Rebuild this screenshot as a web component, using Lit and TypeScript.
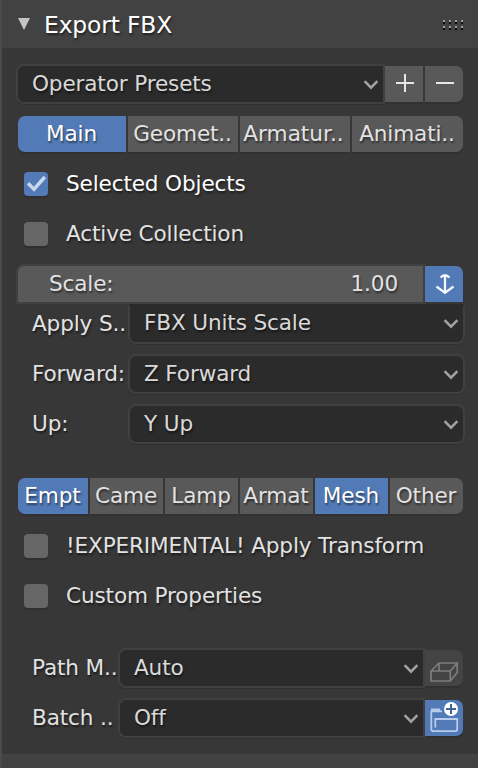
import { LitElement, html, css, svg } from "lit";
import { customElement } from "lit/decorators.js";
import { classMap } from "lit/directives/class-map.js";

const chevron = html`<svg class="chev" width="16" height="10" viewBox="0 0 16 10">
  <path d="M1.600 1.200L8 7.700L14.400 1.200" fill="none" stroke="#a2a2a2" stroke-width="2.500"/></svg>`;

const select = (value: string, cls = "") => html`
  <div class="select ${cls}"><span class="t">${value}</span>${chevron}</div>`;

const check = (label: string, on = false) => html`
  <div class="check">
    <div class=${classMap({ box: true, on })}>
      ${on
        ? html`<svg width="24" height="24" viewBox="0 0 24 24">
            <path d="M4 11.200L10 17.200L20.800 5" fill="none" stroke="#c9d7ef" stroke-width="3.400"/></svg>`
        : ""}
    </div>
    <span class=${classMap({ t: true, bright: on })}>${label}</span>
  </div>`;

const tabs = (cls: string, items: [string, boolean?][]) => html`
  <div class="tabs ${cls}">
    ${items.map(([label, on]) => html`<div class=${classMap({ tab: true, on: !!on })}><span class="t">${label}</span></div>`)}
  </div>`;

@customElement("app-root")
export class AppRoot extends LitElement {
  static styles = css`
    :host {
      display: block;
      width: 478px;
      height: 768px;
      overflow: hidden;
      box-sizing: border-box;
      border-left: 2px solid #4b4b4b;
      background: #373737;
      color: #e2e2e2;
      font: 21.6px/36px "DejaVu Sans", sans-serif;
      letter-spacing: -0.15px;
      text-shadow: 1px 2px 2px rgba(0, 0, 0, 0.5);
    }
    * { box-sizing: border-box; }
    svg { display: block; flex: none; }
    .t { white-space: pre; }
    header {
      height: 48px;
      background: #424242;
      display: flex;
      align-items: center;
      padding: 0 14px 0 16px;
      color: #fff;
      font-size: 23.4px;
    }
    header .t { flex: 1; margin-left: 14px; padding-top: 1px; }
    .tri { margin-top: -1px; }
    .grip { margin-top: 2px; }
    main { padding: 16px 13px 0 14px; height: 706px; display: flex; flex-direction: column; }
    footer { height: 14px; background: #424242; }
    .row { display: flex; height: 40px; margin-bottom: 10px; flex: none; }
    .select {
      flex: 1;
      display: flex;
      align-items: center;
      justify-content: space-between;
      border: 2px solid #404040;
      border-radius: 8px;
      background: #2b2b2b;
      padding: 0 4px 0 14px;
      color: #d9d9d9;
      box-shadow: 0 1px 0 #303030;
    }
    .chev { margin-top: 2px; }
    .joined { border-radius: 8px 0 0 8px; }
    .under { border-top-color: #2b2b2b; border-radius: 0 0 8px 8px; }
    .under .t { margin-top: -2px; }
    .under .chev { margin-top: 0; }
    .label { color: #e2e2e2; padding-left: 16px; width: 112px; flex: none; line-height: 40px; }
    .narrow .label { width: 102px; }
    .btn {
      width: 38px;
      height: 36px;
      margin: 2px 2px 0 0;
      background: #595959;
      flex: none;
      box-shadow: 0 2px 0 #313131;
    }
    .btn.last { border-radius: 0 7px 7px 0; }
    .btn.blue { background: #527ab6; }
    .btn.dim { background: #444; }
    .btn.top { border-radius: 0 7px 0 0; box-shadow: none; }
    .tabs { display: grid; gap: 2px; height: 36px; margin: 2px 0 12px 2px; padding-right: 2px; flex: none; }
    .four { grid-template-columns: 108px 110px 110px 111px; }
    .six { grid-template-columns: 70px repeat(5, 73px); }
    .tab {
      background: #595959;
      text-align: center;
      line-height: 36px;
      overflow: hidden;
      box-shadow: 0 2px 0 #313131;
    }
    .tab .t { margin-left: -1px; }
    .four .tab:nth-child(3) .t { margin-left: -3px; letter-spacing: 0; }
    .tab:first-child { border-radius: 7px 0 0 7px; }
    .tab:last-child { border-radius: 0 7px 7px 0; }
    .tab.on { background: #527ab6; color: #fff; }
    .check { display: flex; height: 40px; margin-bottom: 10px; padding-left: 8px; align-items: center; flex: none; }
    .check .t { margin-left: 18px; }
    .bright { color: #fff; }
    .box { width: 24px; height: 24px; border-radius: 4px; background: #666; box-shadow: 0 2px 1px #2f2f2f; }
    .box.on { background: #527ab6; }
    .scale {
      flex: 1;
      display: flex;
      justify-content: space-between;
      border: 2px solid #404040;
      border-radius: 8px 0 0 0;
      background: #595959;
      padding: 0 25px 0 31px;
      line-height: 36px;
    }
    .row.tight { margin-bottom: 0; }
    .gap22 { height: 22px; flex: none; }
  `;

  render() {
    return html`
      <header>
        <svg class="tri" width="12" height="12" viewBox="0 0 12 12"><path d="M0 0H12L6 12Z" fill="#c4c4c4"/></svg>
        <span class="t">Export FBX</span>
        <svg class="grip" width="22" height="10" viewBox="0 0 22 10" shape-rendering="crispEdges">
          ${[1, 7, 13, 19].map(
            (x) => svg`<path d="M${x} 0h2v2h-2zM${x} 6h2v2h-2z" fill="#a0a0a0"/><path d="M${x} 2h2v2h-2zM${x} 8h2v2h-2z" fill="#0c0c0c"/>`
          )}
        </svg>
      </header>
      <main>
        <div class="row">
          ${select("Operator Presets", "joined")}
          <div class="btn"><svg width="38" height="36"><path d="M11 17H29M20 8V26" stroke="#e6e6e6" stroke-width="2"/></svg></div>
          <div class="btn last"><svg width="38" height="36"><path d="M11 17H29" stroke="#e6e6e6" stroke-width="2"/></svg></div>
        </div>
        ${tabs("four", [["Main", true], ["Geomet.."], ["Armatur.."], ["Animati.."]])}
        ${check("Selected Objects", true)}
        ${check("Active Collection")}
        <div class="row tight">
          <div class="scale"><span class="t">Scale:</span><span class="t">1.00</span></div>
          <div class="btn blue last top"><svg width="38" height="36">
            <path d="M20 9V27M15.500 11.500Q20 7 24.500 11.500M11.500 20.500L20 26.800L28.500 20.500" fill="none" stroke="#f4f7fc" stroke-width="2.300"/></svg></div>
        </div>
        <div class="row"><span class="label t">Apply S..</span>${select("FBX Units Scale", "under")}</div>
        <div class="row"><span class="label t">Forward:</span>${select("Z Forward")}</div>
        <div class="row"><span class="label t">Up:</span>${select("Y Up")}</div>
        <div class="gap22"></div>
        ${tabs("six", [["Empt", true], ["Came"], ["Lamp"], ["Armat"], ["Mesh", true], ["Other"]])}
        ${check("!EXPERIMENTAL! Apply Transform")}
        ${check("Custom Properties")}
        <div class="gap22"></div>
        <div class="row narrow">
          <span class="label t">Path M..</span>${select("Auto", "joined")}
          <div class="btn dim last"><svg width="38" height="36">
            <path d="M6 21H25.300V31H6ZM6 21L14 13H32.200L25.300 21M32.200 13V22.500L25.300 31M14 13V21" fill="none" stroke="#7c7c7c" stroke-width="1.700"/></svg></div>
        </div>
        <div class="row narrow">
          <span class="label t">Batch ..</span>${select("Off", "joined")}
          <div class="btn blue last"><svg width="38" height="36">
            <path d="M17 11.300H6.300V29Q6.300 31.200 8.500 31.200H30Q32.200 31.200 32.200 29V19H10.300V27.500" fill="none" stroke="#b9cbea" stroke-width="1.800"/>
            <path d="M6 8.500H14.500L16 11.500H6Z" fill="#b9cbea"/>
            <circle cx="26" cy="9" r="7" fill="#fff"/><path d="M21 9H31M26 4V14" stroke="#40639c" stroke-width="2"/></svg></div>
        </div>
      </main>
      <footer></footer>
    `;
  }
}
